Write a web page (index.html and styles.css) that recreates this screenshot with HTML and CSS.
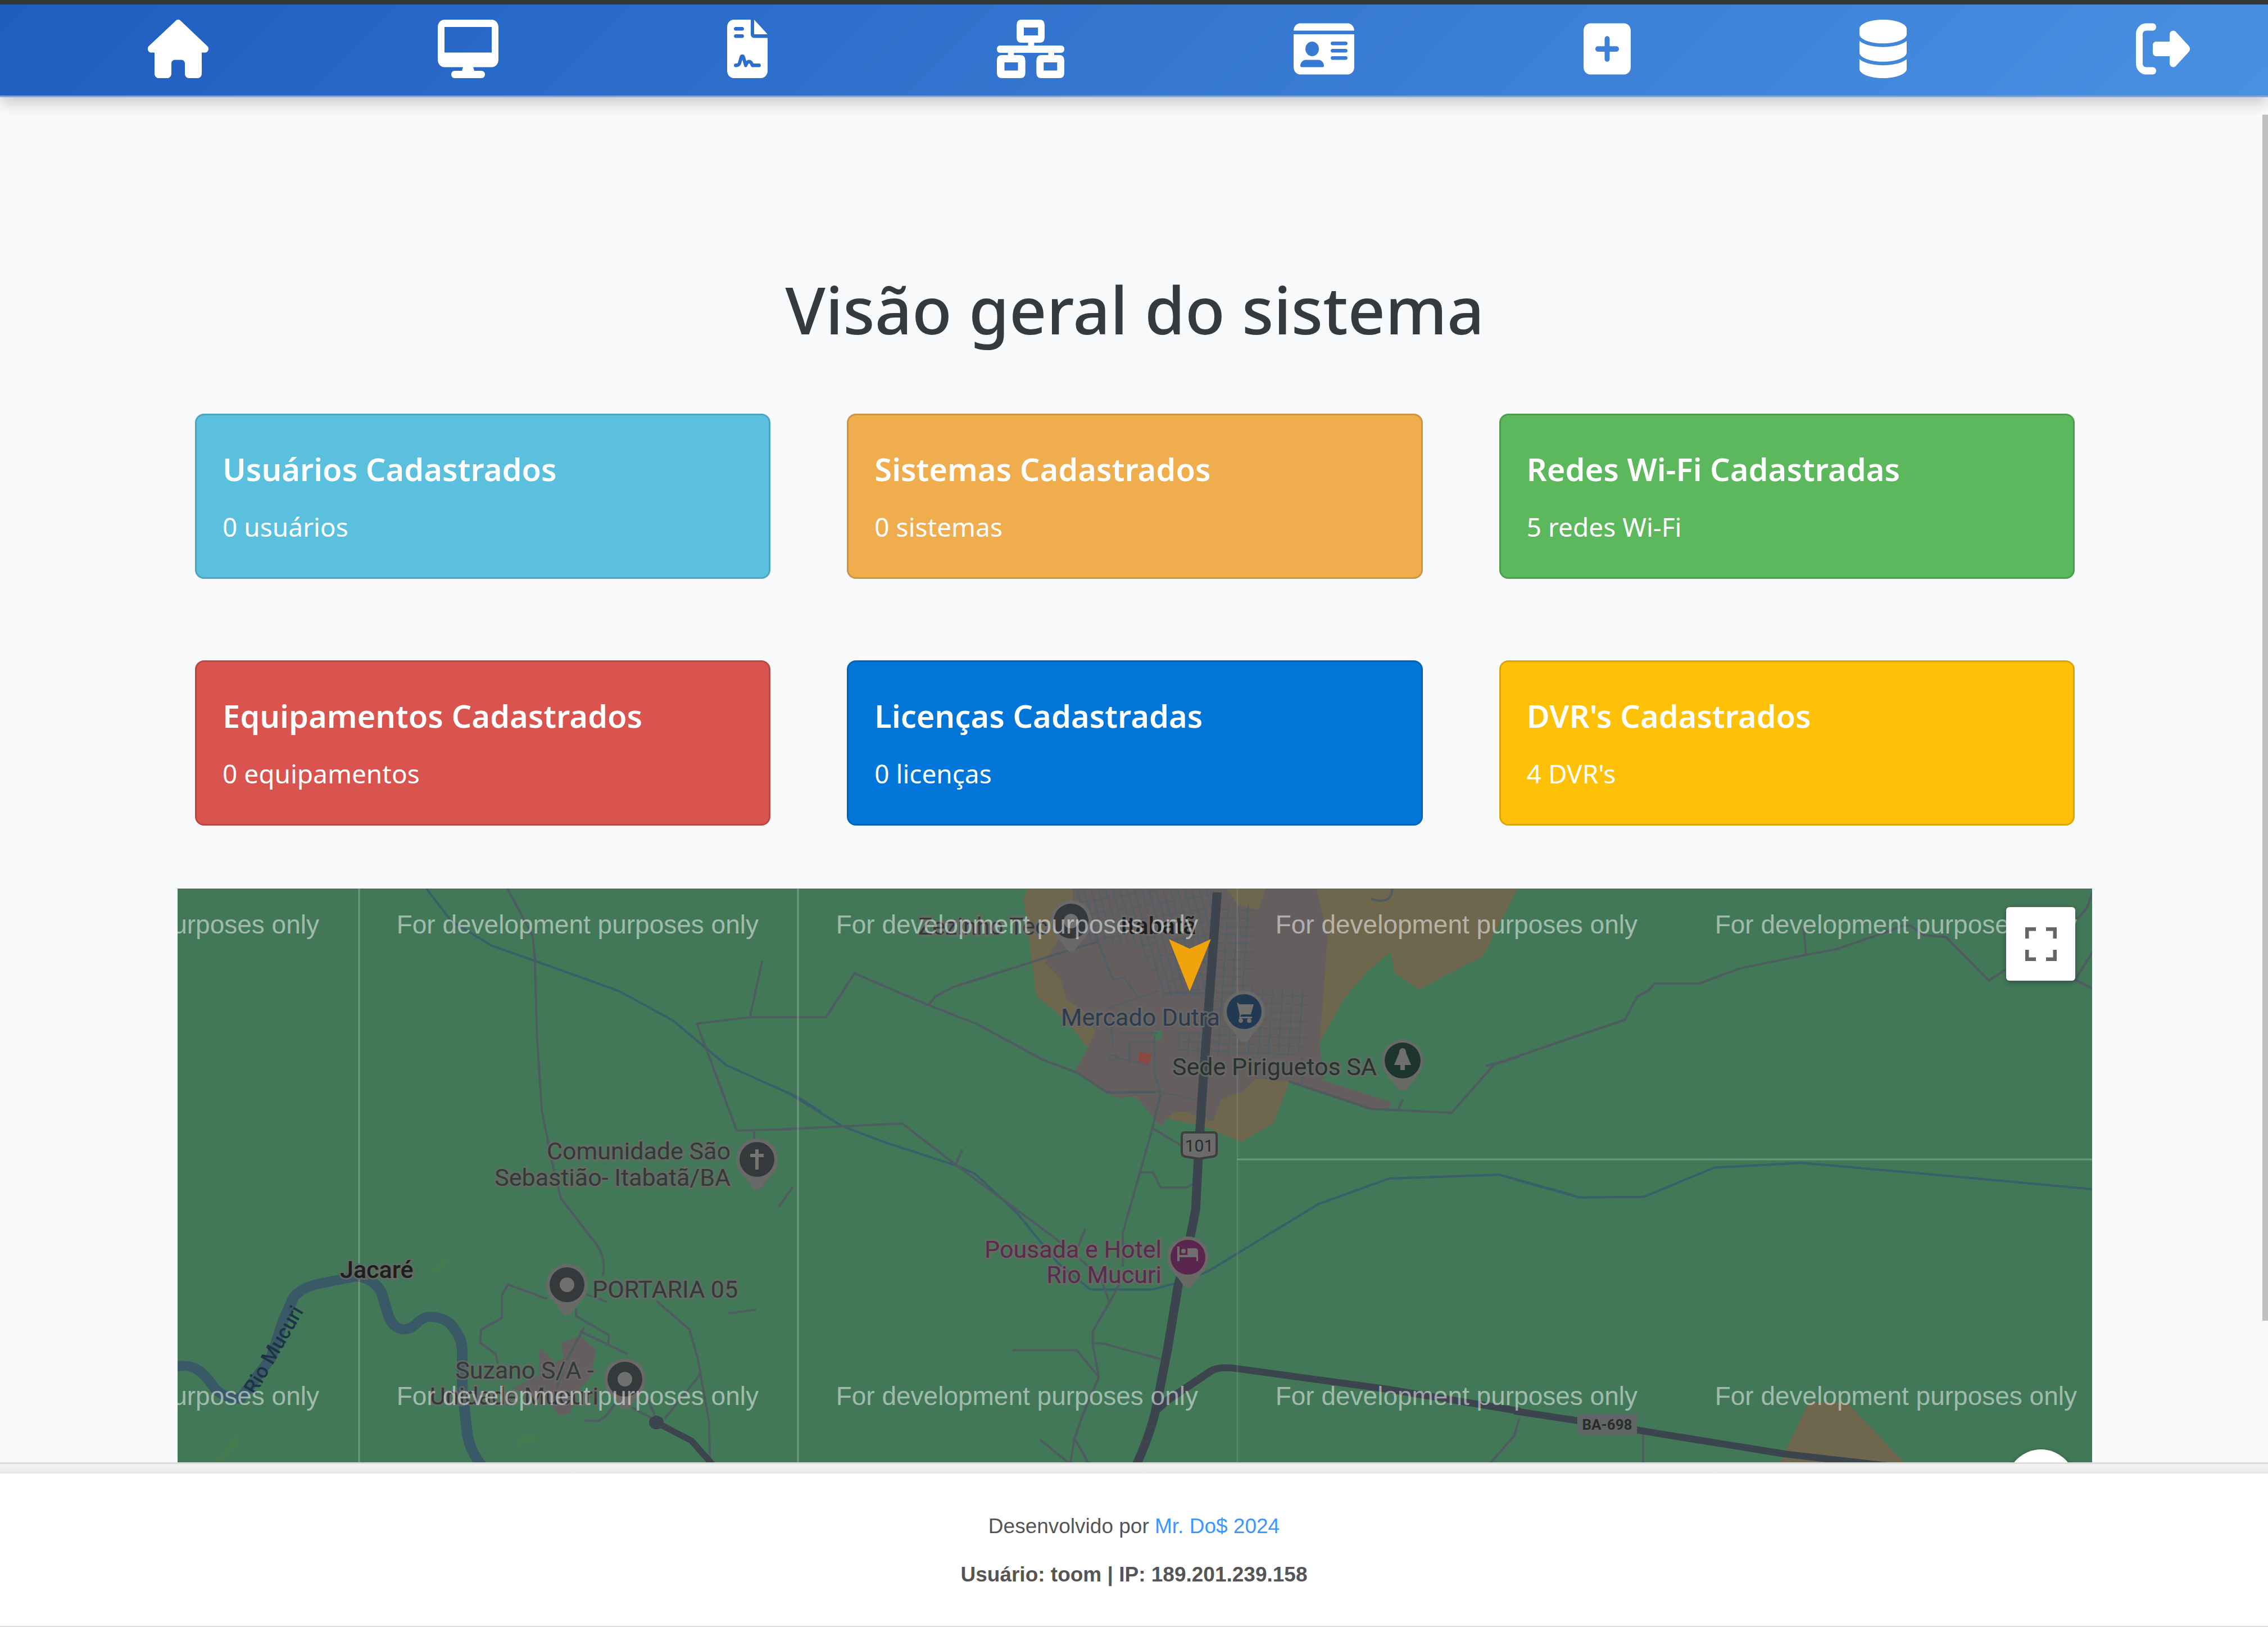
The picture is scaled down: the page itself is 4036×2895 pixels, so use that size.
FILE: index.html
```html
<!DOCTYPE html>
<html lang="pt-BR">
<head>
<meta charset="utf-8">
<meta name="viewport" content="width=device-width, initial-scale=1">
<title>Visão geral do sistema</title>
<link rel="stylesheet" href="styles.css">
</head>
<body>
<header class="topbar">
  <nav class="nav" aria-label="Principal">
    <a href="#" aria-label="Início"><svg class="icon w576" viewBox="0 0 576 512" preserveAspectRatio="none"><path d="M575.8 255.5c0 18-15 32.1-32 32.1h-32l.7 160.2c0 2.7-.2 5.4-.5 8.1V472c0 22.1-17.9 40-40 40H456c-1.1 0-2.2 0-3.3-.1c-1.4 .1-2.8 .1-4.2 .1H416 392c-22.1 0-40-17.9-40-40V448 384c0-17.7-14.3-32-32-32H256c-17.7 0-32 14.3-32 32v64 24c0 22.1-17.9 40-40 40H160 128.1c-1.5 0-3-.1-4.5-.2c-1.2 .1-2.4 .2-3.6 .2H104c-22.1 0-40-17.9-40-40V360c0-.9 0-1.9 .1-2.8V287.6H32c-18 0-32-14-32-32.1c0-9 3-17 10-24L266.4 8c7-7 15-8 22-8s15 2 21 7L564.8 231.5c8 7 12 15 11 24z"/></svg></a>
    <a href="#" aria-label="Equipamentos"><svg class="icon w576" viewBox="0 0 576 512" preserveAspectRatio="none"><path d="M64 0C28.7 0 0 28.7 0 64V352c0 35.3 28.7 64 64 64H240l-10.7 32H160c-17.7 0-32 14.3-32 32s14.3 32 32 32H416c17.7 0 32-14.3 32-32s-14.3-32-32-32H346.7L336 416H512c35.3 0 64-28.7 64-64V64c0-35.3-28.7-64-64-64H64zM512 64V288H64V64H512z"/></svg></a>
    <a href="#" aria-label="Contratos"><svg class="icon w384" viewBox="0 0 384 512" preserveAspectRatio="none"><path d="M64 0C28.7 0 0 28.7 0 64V448c0 35.3 28.7 64 64 64H320c35.3 0 64-28.7 64-64V160H256c-17.7 0-32-14.3-32-32V0H64zM256 0V128H384L256 0zM80 64h64c8.800 0 16 7.200 16 16s-7.200 16-16 16H80c-8.800 0-16-7.200-16-16s7.200-16 16-16zm0 64h64c8.800 0 16 7.200 16 16s-7.200 16-16 16H80c-8.800 0-16-7.200-16-16s7.200-16 16-16zm54.200 253.800c-6.100 20.300-24.800 34.200-46 34.200H80c-8.800 0-16-7.200-16-16s7.200-16 16-16h8.200c7.100 0 13.300-4.600 15.300-11.400l14.900-49.500c3.400-11.300 13.800-19.100 25.600-19.100s22.200 7.700 25.600 19.100l11.600 38.600c7.400-6.200 16.800-9.700 26.800-9.700c15.900 0 30.400 9 37.500 23.200l4.400 8.800H304c8.800 0 16 7.200 16 16s-7.200 16-16 16H240c-6.100 0-11.600-3.400-14.300-8.800l-8.800-17.700c-1.700-3.400-5.100-5.500-8.800-5.500s-7.200 2.100-8.800 5.500l-8.800 17.700c-2.900 5.900-9.200 9.400-15.700 8.800s-12.100-5.100-13.900-11.300L144 349l-9.800 32.800z"/></svg></a>
    <a href="#" aria-label="Redes"><svg class="icon w640" viewBox="0 0 640 512" preserveAspectRatio="none"><path fill-rule="evenodd" d="M235 0H405q48 0 48 48V154q0 48-48 48H354V226H608q32 0 32 32t-32 32H544V310H592q48 0 48 48V464q0 48-48 48H423q-48 0-48-48V358q0-48 48-48H488V290H162V310H222q48 0 48 48V464q0 48-48 48H48q-48 0-48-48V358q0-48 48-48H105V290H32q-32 0-32-32t32-32H296V202H235q-48 0-48-48V48q0-48 48-48zM256 69V138H390V69zM72 374V446H200V374zM444 374V446H572V374z"/></svg></a>
    <a href="#" aria-label="Licenças"><svg class="icon w576" viewBox="0 0 576 512" preserveAspectRatio="none"><path d="M0 96l576 0c0-35.3-28.7-64-64-64H64C28.7 32 0 60.7 0 96zm0 32V416c0 35.3 28.7 64 64 64H512c35.3 0 64-28.7 64-64V128H0zM64 405.3c0-29.5 23.900-53.300 53.300-53.300H234.700c29.500 0 53.300 23.900 53.300 53.300c0 5.900-4.800 10.700-10.700 10.700H74.700c-5.900 0-10.700-4.800-10.700-10.700zM176 192a64 64 0 1 1 0 128 64 64 0 1 1 0-128zm176 16c0-8.800 7.200-16 16-16H496c8.800 0 16 7.200 16 16s-7.200 16-16 16H368c-8.800 0-16-7.200-16-16zm0 64c0-8.800 7.200-16 16-16H496c8.800 0 16 7.200 16 16s-7.200 16-16 16H368c-8.800 0-16-7.200-16-16zm0 64c0-8.800 7.200-16 16-16H496c8.800 0 16 7.200 16 16s-7.200 16-16 16H368c-8.800 0-16-7.200-16-16z"/></svg></a>
    <a href="#" aria-label="Adicionar"><svg class="icon w448" viewBox="0 0 448 512" preserveAspectRatio="none"><path d="M64 32C28.700 32 0 60.700 0 96V416c0 35.300 28.700 64 64 64H384c35.300 0 64-28.700 64-64V96c0-35.300-28.700-64-64-64H64zM200 344V280H136c-13.300 0-24-10.700-24-24s10.700-24 24-24h64V168c0-13.300 10.700-24 24-24s24 10.700 24 24v64h64c13.300 0 24 10.700 24 24s-10.700 24-24 24H248v64c0 13.300-10.700 24-24 24s-24-10.700-24-24z"/></svg></a>
    <a href="#" aria-label="Banco de dados"><svg class="icon w448" viewBox="0 0 448 512" preserveAspectRatio="none"><path d="M448 80v48c0 44.200-100.300 80-224 80S0 172.200 0 128V80C0 35.800 100.300 0 224 0S448 35.800 448 80zM393.200 214.700c20.800-7.400 39.900-16.900 54.800-28.600V288c0 44.200-100.300 80-224 80S0 332.200 0 288V186.100c14.900 11.800 34 21.200 54.800 28.600C99.700 230.700 159.500 240 224 240s124.300-9.300 169.200-25.300zM0 346.100c14.900 11.800 34 21.200 54.800 28.600C99.700 390.700 159.500 400 224 400s124.300-9.300 169.200-25.300c20.800-7.400 39.900-16.900 54.800-28.600V432c0 44.200-100.300 80-224 80S0 476.200 0 432V346.100z"/></svg></a>
    <a href="#" aria-label="Sair"><svg class="icon w512" viewBox="0 0 512 512" preserveAspectRatio="none"><path d="M377.900 105.900L500.700 228.700c7.200 7.200 11.300 17.100 11.300 27.300s-4.100 20.100-11.300 27.300L377.900 406.100c-6.400 6.400-15 9.900-24 9.900c-18.700 0-33.900-15.200-33.900-33.900l0-62.100-128 0c-17.700 0-32-14.300-32-32l0-64c0-17.700 14.300-32 32-32l128 0 0-62.100c0-18.700 15.200-33.900 33.900-33.900c9 0 17.600 3.600 24 9.900zM160 96L96 96c-17.700 0-32 14.300-32 32l0 256c0 17.700 14.300 32 32 32l64 0c17.700 0 32 14.300 32 32s-14.300 32-32 32l-64 0c-53 0-96-43-96-96L0 128C0 75 43 32 96 32l64 0c17.700 0 32 14.300 32 32s-14.300 32-32 32z"/></svg></a>
  </nav>
</header>

<main class="content">
  <h1>Visão geral do sistema</h1>
  <section class="cards">
    <article class="card users"><h2>Usuários Cadastrados</h2><p>0 usuários</p></article>
    <article class="card systems"><h2>Sistemas Cadastrados</h2><p>0 sistemas</p></article>
    <article class="card wifi"><h2>Redes Wi-Fi Cadastradas</h2><p>5 redes Wi-Fi</p></article>
    <article class="card equipment"><h2>Equipamentos Cadastrados</h2><p>0 equipamentos</p></article>
    <article class="card licenses"><h2>Licenças Cadastradas</h2><p>0 licenças</p></article>
    <article class="card dvrs"><h2>DVR's Cadastrados</h2><p>4 DVR's</p></article>
  </section>

  <section class="map" aria-label="Mapa">
    <svg class="map-canvas" viewBox="316 1580 3407 1110">
      <defs>
        <path id="pin" d="M0 54C-6 54-9 49-13 43C-20 32-37 22-37 0A37 37 0 0 1 37 0C37 22 20 32 13 43C9 49 6 54 0 54Z"/>
        <pattern id="blocks-west" width="14" height="34" patternUnits="userSpaceOnUse" patternTransform="rotate(-12)"><path class="street" d="M0 2H14M2 0V34"/></pattern>
        <pattern id="blocks-east" width="20" height="22" patternUnits="userSpaceOnUse" patternTransform="rotate(3)"><path class="street" d="M0 2H20M2 0V22"/></pattern>
      </defs>
      <rect class="land" x="316" y="1580" width="3407" height="1110"/>

      <!-- town and its outskirts -->
      <g transform="translate(1400 1570) scale(.8929 .6761)">
        <path class="outskirts" d="M485 0L472 40L497 295L565 375L600 435L690 560L740 615L830 640L905 682L970 632L1000 530L1062 420L1110 305L1160 230L1203 182L1212 237L1260 280L1388 192L1462 0Z"/>
        <path class="town" d="M570 0V80L515 210L545 250L557 305L590 335L615 390L600 435L575 495L630 550L665 567L695 560L745 640L770 605L790 600L850 628L865 570L910 548L935 515L1000 522L1160 592L1200 597L1205 577L1070 520L1062 420L1078 140L1053 0H960L940 70L900 60L870 0Z"/>
        <path class="forest" d="M730 388h18v24h-18z"/>
        <path class="hospital" d="M703 445L728 450L720 482L700 475Z"/>
        <path fill="url(#blocks-west)" d="M572 0H850L842 295L750 300L705 170L600 150Z"/>
        <path fill="url(#blocks-east)" d="M858 60H930V275L1040 285L1035 450L990 455H780V395L845 390Z"/>
        <g class="line town-road">
          <path d="M610 120L650 255L672 248L700 300M640 330L740 285M645 345L650 430M665 395H740M660 460L725 480M683 475V420H730M733 400V500L745 550L820 572M1027 460V530M750 290H850"/>
          <circle cx="651" cy="460" r="7"/>
        </g>
      </g>
      <g transform="translate(2700 1570) scale(.852 .6761)">
        <path class="outskirts" d="M610 1365L690 1370L812 1530L860 1600H520Z"/>
      </g>

      <!-- western area -->
      <g transform="translate(310 1570) scale(.7334 .6761)">
        <path class="farm" d="M655 985L665 1000L635 1035L625 1020ZM835 1460L882 1450L875 1470L832 1485ZM165 1440L150 1480L110 1535H95L130 1480Z"/>
        <path class="town" d="M885 1220L925 1262L945 1250L938 1210L985 1193L1024 1228L1010 1300L985 1330L960 1395L935 1402L910 1370L820 1330L885 1295Z"/>
        <path class="river" d="M0 1274C45 1262 70 1285 95 1325Q110 1352 160 1358L235 1250L265 1150L290 1090Q310 1065 350 1055L440 1036Q490 1040 505 1085L520 1140Q530 1170 555 1175C590 1175 590 1140 625 1142Q665 1145 680 1175Q700 1200 699 1240V1330L710 1440Q715 1500 760 1550L820 1640"/>
        <path class="line creek" d="M612 15L672 100L770 165L875 205L1080 285L1210 362L1340 480L1515 565L1568 602"/>
        <path class="line road" d="M806 10L870 140L875 200L880 400L892 600L918 740L938 830L1020 945Q1050 985 1040 1035M1490 354H1395L1268 370L1365 652L1500 648M1427 205L1397 352M1407 652V680M1501 800L1467 853M905 1095L810 1057L795 1085V1145L745 1175L742 1210L780 1240L785 1265M1000 1083L1050 1103M1170 1100L1250 1175L1270 1250L1298 1420L1300 1540M975 1120V1140L1055 1190L1053 1215M985 1180L1100 1240M995 1170L950 1260L928 1330M1345 1133L1412 1123M1278 1290L1250 1330L1190 1410M995 1415L1030 1416L1050 1400L1070 1370M1110 1380L1160 1410M1145 1350L1170 1410"/>
        <circle class="highway-end" cx="1170" cy="1420" r="18"/>
        <path class="highway minor" d="M1170 1420L1255 1468L1310 1535L1350 1600"/>
      </g>

      <!-- central area -->
      <g transform="translate(1400 1570) scale(.8929 .6761)">
        <path class="line creek" d="M0 550L110 640L190 680L340 745L375 765L460 870L500 935L540 1000L605 1070H730L790 1048L840 1022L1060 845L1200 778L1420 768L1568 822"/>
        <path class="line road" d="M0 354H78L135 238L283 322L380 372L510 465L580 500L640 552L745 550M283 322L295 300L330 275L560 178L620 155M0 648L230 633L340 745L530 930L625 1035L643 1105M350 703L335 745M745 555L728 650L670 920V1010M728 645L785 690M705 762H730L745 802H795L815 790M595 910L580 960M665 1050L643 1105L610 1180V1215L622 1300L590 1400L573 1465L565 1530M450 1230H578L622 1300M610 1212H630L745 1253M505 1465L565 1530M575 1465L603 1530M1460 1410L1450 1455L1400 1530M1000 522L1165 595L1325 605L1410 478L1460 457M1228 570L1218 598M1165 42Q1205 60 1207 15"/>
        <path class="highway" d="M858 25L843 290L830 520L822 680L815 860L800 960L780 1060L760 1220L735 1390Q720 1470 690 1550"/>
        <path class="highway" d="M735 1390L755 1365L845 1285Q860 1273 890 1277L1200 1333L1460 1390"/>
      </g>

      <!-- eastern area -->
      <g transform="translate(2700 1570) scale(.852 .6761)">
        <path class="line creek" d="M0 782L130 828L265 826L412 749L595 737L820 762L1210 807"/>
        <path class="line road" d="M-65 482L-20 465L225 360L250 300L275 282L287 265H380L465 225L600 190L665 175L770 130L805 112H820L850 138L895 142L985 257L1020 228M598 118L603 187M1205 15L1190 65L1170 95M1165 255L1205 175M1165 255L1205 280M263 1450V1540"/>
        <path class="highway" d="M-5 1390L125 1415L250 1440L560 1503L780 1535L900 1560"/>
      </g>

      <path class="tile-edge" d="M639 1580V2690M1420 1580V2690M2202 2062H3723"/>
      <path class="tile-edge faint" d="M2202 1580V2690"/>

      <!-- places -->
      <g class="place">
        <use class="pin-back" href="#pin" x="1347" y="2062"/><circle cx="1347" cy="2062" r="31"/><path class="glyph-line" d="M1347 2044V2080M1335 2055H1359"/>
        <use class="pin-back" href="#pin" x="1009" y="2285"/><circle cx="1009" cy="2285" r="31"/><circle class="glyph" cx="1009" cy="2285" r="13"/>
        <use class="pin-back" href="#pin" x="1112" y="2453"/><circle cx="1112" cy="2453" r="31"/><circle class="glyph" cx="1112" cy="2453" r="13"/>
        <use class="pin-back" href="#pin" x="1906" y="1638"/><circle cx="1906" cy="1638" r="31"/><circle class="glyph" cx="1906" cy="1638" r="13"/>
        <g class="shop"><use class="pin-back" href="#pin" x="2214" y="1799"/><circle cx="2214" cy="1799" r="31"/><path class="glyph" d="M2201 1782L2206 1786H2231L2226 1804H2209L2207 1808H2228V1811H2205L2206 1804Z"/><circle class="glyph" cx="2208" cy="1815" r="4"/><circle class="glyph" cx="2223" cy="1815" r="4"/></g>
        <g class="park"><use class="pin-back" href="#pin" x="2496" y="1886"/><circle cx="2496" cy="1886" r="32"/><path class="glyph" d="M2496 1864Q2502 1864 2502 1872L2511 1894H2500V1903H2492V1894H2481L2490 1872Q2490 1864 2496 1864Z"/></g>
        <g class="hotel"><use class="pin-back" href="#pin" x="2114" y="2236"/><circle cx="2114" cy="2236" r="31"/><path class="glyph" d="M2095 2217H2099V2232H2113V2220H2127Q2132 2220 2132 2226V2243H2129V2236H2099V2243H2095Z"/><circle class="glyph" cx="2106" cy="2225" r="4"/></g>

        <text class="end" x="1300" y="2062">Comunidade São</text>
        <text class="end" x="1300" y="2109">Sebastião- Itabatã/BA</text>
        <text x="1054" y="2308">PORTARIA 05</text>
        <text class="end" x="1057" y="2452">Suzano S/A -</text>
        <text class="end" x="1065" y="2498">Unidade Mucuri</text>
        <text x="1634" y="1662">Zezinho Tec</text>
        <text class="city" x="605" y="2273">Jacaré</text>
        <text class="city" x="1994" y="1661">Itabatã</text>
        <text class="water" transform="translate(454 2482) rotate(-60)">Rio Mucuri</text>
        <text class="shop" x="1888" y="1824">Mercado Dutra</text>
        <text class="park" x="2086" y="1912">Sede Piriguetos SA</text>
        <text class="hotel end" x="2067" y="2237">Pousada e Hotel</text>
        <text class="hotel end" x="2067" y="2282">Rio Mucuri</text>
      </g>
      <path class="shield" d="M2108 2014H2160Q2165 2014 2165 2020V2050Q2165 2056 2158 2057L2134 2061L2110 2057Q2103 2056 2103 2050V2020Q2103 2014 2108 2014Z"/>
      <text class="route" x="2134" y="2048">101</text>
      <rect class="plate" x="2807" y="2514" width="106" height="38"/>
      <text class="route state" x="2860" y="2543">BA-698</text>

      <g class="watermark">
        <text x="568" y="1660">For development purposes only</text>
        <text x="1350" y="1660">For development purposes only</text>
        <text x="2132" y="1660">For development purposes only</text>
        <text x="2914" y="1660">For development purposes only</text>
        <text x="3696" y="1660">For development purposes only</text>
        <text x="568" y="2499">For development purposes only</text>
        <text x="1350" y="2499">For development purposes only</text>
        <text x="2132" y="2499">For development purposes only</text>
        <text x="2914" y="2499">For development purposes only</text>
        <text x="3696" y="2499">For development purposes only</text>
      </g>
      <path class="marker" d="M2080 1670L2117 1687L2155 1670L2117 1763Z"/>
    </svg>
    <button class="map-button fullscreen" type="button" aria-label="Tela cheia">
      <svg viewBox="0 0 56 60"><path d="M3 20V3H19M37 3H53V20M53 40V57H37M19 57H3V40"/></svg>
    </button>
    <button class="map-button camera" type="button" aria-label="Controles da câmera">
      <svg viewBox="0 0 56 60"><path d="M22 4L28 -2L34 4"/></svg>
    </button>
  </section>
  <div class="scroll-thumb" aria-hidden="true"></div>
</main>

<footer class="footer">
  <p>Desenvolvido por <a href="#">Mr. Do$ 2024</a></p>
  <p class="session">Usuário: toom | IP: 189.201.239.158</p>
</footer>
</body>
</html>
```
FILE: styles.css
```css
* { box-sizing: border-box; margin: 0; padding: 0; }

body {
  display: flex;
  flex-direction: column;
  height: 100vh;
  overflow: hidden;
  background: #f8fafc;
  font-family: "Noto Sans", "Open Sans", sans-serif;
}

.topbar {
  position: relative;
  z-index: 2;
  flex: none;
  border-top: 8px solid #343834;
  border-bottom: 3px solid #86a4d3;
  background: linear-gradient(135deg, #1f5dbf, #4a90e2);
  box-shadow: 0 10px 26px rgba(0, 0, 0, .2);
}
.nav {
  display: flex;
  align-items: center;
  justify-content: space-between;
  padding: 27px 139px 31px 263px;
}
.nav a { display: block; height: 104px; }
.icon { display: block; height: 104px; fill: #fff; }
.w384 { width: 72px; }
.w448 { width: 84px; }
.w512 { width: 96px; }
.w576 { width: 108px; }
.w640 { width: 120px; }

.content {
  position: relative;
  flex: 1;
  min-height: 0;
  overflow: hidden;
  padding: 297px 313px 0 316px;
}
h1 {
  margin-bottom: 106px;
  color: #343a40;
  font-size: 116px;
  font-weight: 500;
  line-height: 160px;
  text-align: center;
}
.cards {
  display: grid;
  grid-template-columns: repeat(3, 1fr);
  gap: 145px 136px;
  padding: 0 31px;
}
.card {
  border: 3px solid rgba(0, 0, 0, .14);
  border-radius: 16px;
  padding: 55px 46px 52px;
  color: #fff;
}
.card h2 { margin-bottom: 25px; font-size: 56px; font-weight: 600; line-height: 80px; }
.card p { font-size: 46px; line-height: 76px; }
.users { background: #5bc0de; }
.systems { background: #f0ad4e; }
.wifi { background: #5cb85c; }
.equipment { background: #d9534f; }
.licenses { background: #0275d8; }
.dvrs { background: #ffc107; }

.map { position: relative; margin-top: 112px; }
.map-canvas { display: block; width: 100%; font-family: Roboto, sans-serif; }
.land { fill: #427857; }
.forest { fill: #427857; }
.farm { fill: #487a50; }
.outskirts { fill: #6f664e; }
.town { fill: #645f5e; }
.hospital { fill: #8a4a42; }
.street { fill: none; stroke: #535d66; stroke-width: 3; }
.line, .highway, .river { fill: none; stroke-linejoin: round; }
.line { stroke-width: 4; vector-effect: non-scaling-stroke; }
.road { stroke: #4e5c61; }
.town-road { stroke: #535d66; }
.creek { stroke: #3a5f68; }
.river { stroke: #385965; stroke-width: 26; }
.highway { stroke: #3c444e; stroke-width: 18; }
.highway.minor { stroke-width: 16; }
.highway-end { fill: #3c444e; }
.tile-edge { fill: none; stroke: rgba(255, 255, 255, .24); stroke-width: 3; }
.tile-edge.faint { stroke: rgba(255, 255, 255, .1); }

.pin-back { fill: #696967; }
.place circle { fill: #35393c; }
.place .glyph { fill: #6f6f6d; }
.glyph-line { stroke: #74766f; stroke-width: 6; }
.place .shop circle:not(.glyph) { fill: #213a52; }
.place .park circle { fill: #1d352c; }
.place .hotel circle:not(.glyph) { fill: #5a264d; }
.place text {
  fill: #34393a;
  font-size: 43px;
  stroke: rgba(106, 104, 102, .8);
  stroke-width: 6;
  paint-order: stroke;
}
.place .end { text-anchor: end; }
.place .city { fill: #1c1f1f; font-weight: 500; }
.place .water { fill: #1d3446; font-size: 36px; font-weight: 500; stroke: none; }
.place text.shop { fill: #2c3c50; }
.place text.park { fill: #28332f; }
.place text.hotel { fill: #592b4c; }
.shield { fill: #6b6b6b; stroke: #3c3f3e; stroke-width: 4; }
.plate { fill: #626565; }
.route { fill: #2a2b2b; font-size: 30px; text-anchor: middle; }
.route.state { font-size: 26px; font-weight: 700; }
.watermark {
  fill: rgba(255, 255, 255, .5);
  font-family: "Liberation Sans", Arial, sans-serif;
  font-size: 46px;
  text-anchor: end;
}
.marker { fill: #f0a30a; }

.map-button {
  position: absolute;
  right: 30px;
  border: 0;
  background: #fff;
  box-shadow: 0 3px 10px rgba(0, 0, 0, .3);
}
.map-button svg { display: block; width: 56px; margin: auto; fill: none; stroke: #666; stroke-width: 7; }
.fullscreen { top: 33px; width: 123px; height: 131px; border-radius: 6px; }
.camera { top: 998px; width: 122px; height: 122px; border-radius: 50%; }
.map-button.camera svg { overflow: visible; }

.scroll-thumb {
  position: absolute;
  top: 31px;
  right: 0;
  width: 10px;
  height: 2146px;
  background: #c1c1c1;
}

.footer {
  position: relative;
  flex: none;
  border-bottom: 2px solid #dedede;
  padding-bottom: 63px;
  background: #fff;
  color: #555;
  font-family: "Liberation Sans", Arial, sans-serif;
  font-size: 37px;
  line-height: 56px;
  text-align: center;
}
.footer::before {
  content: "";
  display: block;
  height: 17px;
  margin-bottom: 66px;
  border-top: 3px solid #dcdcda;
  background: linear-gradient(#f3f3f3, #e9e9e9);
}
.footer a { color: #3b96ff; text-decoration: none; }
.session { margin-top: 30px; font-weight: 700; }
```
